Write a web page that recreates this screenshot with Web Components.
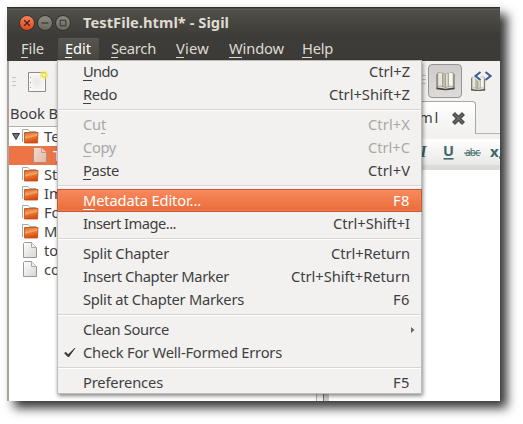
<!DOCTYPE html>
<html lang="en"><head><meta charset="utf-8"><title>Sigil</title>
<style>
html,body{margin:0;background:#fff;height:424px;overflow:hidden}
body{padding:7px 0 0 7px;box-sizing:border-box;font:14.7px/20px "Noto Sans","Open Sans",sans-serif;color:#3f3f3f}
</style></head><body>
<sigil-window></sigil-window>
<script>
// Text line whose letter spacing is adjusted to fill the width in its "w" attribute.
class FitText extends HTMLElement{
  connectedCallback(){
    const r=this.attachShadow({mode:'open'});
    r.innerHTML='<style>:host{display:inline-block;white-space:nowrap;margin-bottom:2px}span{display:inline-block}::slotted(u){text-decoration:none;background:linear-gradient(currentColor,currentColor) 0 100%/calc(100% - 1px) 1px no-repeat}</style><span><slot></slot></span>';
    const s=r.querySelector('span'),w=+this.getAttribute('w');
    if(w){const n=this.textContent.length,nat=s.getBoundingClientRect().width;
      s.style.letterSpacing=((w-1-nat)/n)+'px';this.style.width=w+'px';}
  }
}
const def=(name,html,up)=>customElements.define(name,class extends HTMLElement{
  connectedCallback(){if(this.shadowRoot)return;const r=this.attachShadow({mode:'open'});r.innerHTML=html;if(up)up(this,r)}
});
customElements.define('fit-text',FitText);

def('title-bar',`<style>
:host{display:flex;align-items:center;height:31px;padding:0 0 0 12px;box-sizing:border-box;gap:2px;font-weight:700;color:#dfdbd2}
svg{width:16px;height:16px;display:block;flex:none;overflow:visible}fit-text{margin-left:10px}
</style>
<svg viewBox="0 0 16 16"><defs><linearGradient id="a" x2="0" y2="1"><stop stop-color="#f58561"/><stop offset="1" stop-color="#dd4717"/></linearGradient></defs><circle cx="8" cy="8" r="7.5" fill="url(#a)" stroke="#35322c"/><path d="M5.2 5.2l5.6 5.6M10.8 5.2l-5.6 5.6" stroke="#48251a" stroke-width="1.3"/></svg>
<svg viewBox="0 0 16 16"><defs><linearGradient id="b" x2="0" y2="1"><stop stop-color="#8e8c82"/><stop offset="1" stop-color="#68665e"/></linearGradient></defs><circle cx="8" cy="8" r="7.5" fill="url(#b)" stroke="#302f2a"/><path d="M4.5 8h7" stroke="#35342f" stroke-width="1.2"/></svg>
<svg viewBox="0 0 16 16"><defs><linearGradient id="c" x2="0" y2="1"><stop stop-color="#8e8c82"/><stop offset="1" stop-color="#68665e"/></linearGradient></defs><circle cx="8" cy="8" r="7.5" fill="url(#c)" stroke="#302f2a"/><path d="M5.2 5.2h5.6v5.6H5.2z" fill="none" stroke="#35342f"/></svg>
<fit-text w="147">TestFile.html* - Sigil</fit-text>`);

def('menu-title',`<style>:host{display:flex;height:22px;align-items:center;padding:0 7px;color:#dfdbd2;box-sizing:border-box;border-radius:3px 3px 0 0}
:host([open]){background:linear-gradient(#55544e,#484741);color:#fff;box-shadow:inset 0 1px #5b5a53}</style><slot></slot>`);

def('menu-row',`<style>:host{display:flex;height:23px;box-sizing:border-box;padding:0 11px 0 26px;align-items:center;justify-content:space-between;position:relative}
:host([off]){color:#aaa8a5}
:host([active]){color:#fff;background:linear-gradient(#f98b5f,#e96b39);box-shadow:inset 0 0 0 1px #bf5a33,inset 0 0 0 2px #f98e6466}
svg{position:absolute;overflow:visible}.c{left:7px;top:7px}.a{right:7px;top:9px}</style><slot></slot>`,(e,r)=>{
  if(e.hasAttribute('checked'))r.innerHTML+='<svg class="c" width="12" height="10"><path d="M0 5L2 4L4.2 6.3L10.5 0H11.5L5 9H3.8Z" fill="#3a3a3a"/></svg>';
  if(e.hasAttribute('sub'))r.innerHTML+='<svg class="a" width="4" height="6"><path d="M0 0L3.5 3L0 6Z" fill="#666"/></svg>';
});
def('menu-line',`<style>:host{display:block;height:7px;margin:0 1px;background:linear-gradient(#d7d5d2 0 0) 0 3px/100% 1px no-repeat,linear-gradient(#fff 0 0) 0 4px/100% 1px no-repeat}</style>`);

def('edit-menu',`<style>:host{display:block;width:365px;height:334px;background:linear-gradient(90deg,#f2f1f0,#f2f1ef);box-shadow:1px 2px 4px #0007,inset 0 0 0 1px #bdbbb7}</style>
<menu-row><fit-text w="36"><u>U</u>ndo</fit-text><fit-text w="42">Ctrl+Z</fit-text></menu-row>
<menu-row><fit-text w="35"><u>R</u>edo</fit-text><fit-text w="82">Ctrl+Shift+Z</fit-text></menu-row>
<menu-line></menu-line>
<menu-row off><fit-text w="24">Cu<u>t</u></fit-text><fit-text w="43">Ctrl+X</fit-text></menu-row>
<menu-row off><fit-text w="34"><u>C</u>opy</fit-text><fit-text w="43">Ctrl+C</fit-text></menu-row>
<menu-row><fit-text w="37"><u>P</u>aste</fit-text><fit-text w="43">Ctrl+V</fit-text></menu-row>
<menu-line></menu-line>
<menu-row active><fit-text w="119"><u>M</u>etadata Editor...</fit-text><fit-text w="18">F8</fit-text></menu-row>
<menu-row><fit-text w="94">Insert Image...</fit-text><fit-text w="78">Ctrl+Shift+I</fit-text></menu-row>
<menu-line></menu-line>
<menu-row><fit-text w="87">Split Chapter</fit-text><fit-text w="80">Ctrl+Return</fit-text></menu-row>
<menu-row><fit-text w="147">Insert Chapter Marker</fit-text><fit-text w="120">Ctrl+Shift+Return</fit-text></menu-row>
<menu-row><fit-text w="162">Split at Chapter Markers</fit-text><fit-text w="18">F6</fit-text></menu-row>
<menu-line></menu-line>
<menu-row sub><fit-text w="87">Clean Source</fit-text></menu-row>
<menu-row checked><fit-text w="200">Check For Well-Formed Errors</fit-text></menu-row>
<menu-line></menu-line>
<menu-row><fit-text w="81">Preferences</fit-text><fit-text w="18">F5</fit-text></menu-row>`);

const folder='<svg width="17" height="15" viewBox="0 0 17 15"><defs><linearGradient id="f" x2="0.3" y2="1"><stop stop-color="#d4601f"/><stop offset=".5" stop-color="#f3a767"/><stop offset=".6" stop-color="#e8732f"/><stop offset="1" stop-color="#d94d12"/></linearGradient></defs><path d="M.5 13V.5H6L7.5 2.5H14V5" fill="#fff" stroke="#a9a9a5"/><path d="M2.5 3.5H16L15.5 14H2.5Z" fill="url(#f)" stroke="#c0480f" stroke-width=".8"/></svg>';
const page='<svg width="15" height="17" viewBox="0 0 15 17"><defs><linearGradient id="p" x2="1" y2="1"><stop stop-color="#fff"/><stop offset="1" stop-color="#d5d5d3"/></linearGradient></defs><path d="M1.5.5H8.5L13.5 5.5V15.5H.5V1.5Z" fill="url(#p)" stroke="#999995"/><path d="M8.5.5V5.5H13.5" fill="#eee" stroke="#aaa"/></svg>';
def('tree-row',`<style>:host{display:flex;height:19px;align-items:center;padding-left:13px;gap:5px;position:relative;white-space:nowrap}
svg{flex:none}:host([kind=page]){padding-left:14px;gap:6px}
.l{margin-bottom:2px}
:host([selected]){background:#ee7445!important;padding-left:24px!important;gap:3px!important;color:#fff}:host([selected]) svg{opacity:.72}
.t{position:absolute;left:3px;top:6px;width:8px;height:7px}:host([selected]) .l{margin:0;border:1px dotted #a77762;height:17px;width:30px;padding-left:1px;line-height:17px}</style><span class="i"></span><span class="l"><slot></slot></span>`,(e,r)=>{
  const i=r.querySelector('.i');i.style.display='flex';i.innerHTML=e.getAttribute('kind')=='page'?page:folder;
  if(e.hasAttribute('expanded'))r.innerHTML+='<svg class="t" viewBox="0 0 8 7"><path d="M.5.5H7.5L4 6.5Z" fill="#777" stroke="#333"/></svg>';
});

def('book-browser',`<style>:host{display:flex;flex-direction:column;width:308px;height:340px}
.bar{height:40px;display:flex;align-items:center;box-sizing:border-box;padding:0 0 0 3px;gap:12px}
.h{height:25px;padding:2px 0 0 1px;box-sizing:border-box}
.list{flex:1;background:#fff;border:1px solid #b5b0a9;border-bottom:0;border-left:0}</style>
<div class="bar"><svg width="4" height="9"><path d="M0 .5h4M0 4.5h4M0 8.5h4" stroke="#c9c7c4"/></svg>
<svg width="21" height="22" viewBox="0 0 21 22"><defs><radialGradient id="n"><stop stop-color="#e6e6e4"/><stop offset="1" stop-color="#fafafa"/></radialGradient></defs><path d="M.5 2.5h17v19H.5z" fill="url(#n)" stroke="#8b8b87"/><path d="M2.5 7v1M2.5 12v1M2.5 17v1" stroke="#999"/><circle cx="16" cy="5" r="4.4" fill="#f5ea68" opacity=".65"/><circle cx="16" cy="5" r="2" fill="#fff9b0" stroke="#eadb2e"/></svg></div>
<div class="h"><fit-text w="49">Book B</fit-text></div>
<div class="list"><tree-row expanded>Te</tree-row><tree-row kind="page" selected>T</tree-row><tree-row>St</tree-row><tree-row>Im</tree-row><tree-row>Fo</tree-row><tree-row>M</tree-row><tree-row kind="page">to</tree-row><tree-row kind="page">co</tree-row></div>`);

const book='<path d="M2 5L4 3V20L2 21ZM28 5L26 3V20L28 21Z" fill="#777269"/><path d="M2 20L13 21L15 22L17 21L28 20V22L16 23H14L2 22Z" fill="#4a4437"/><path d="M4 3Q9 1.5 11 4V19Q8 17.5 4 19Z" fill="#e9e7dc" stroke="#8c887c" stroke-width=".8"/><path d="M11 4Q13 2 15 5V21Q13 18 11 19Z" fill="#c4c0ae" stroke="#8c887c" stroke-width=".7"/><path d="M26 3Q21 1.5 19 4V19Q22 17.5 26 19Z" fill="#f7f5ee" stroke="#8c887c" stroke-width=".8"/><path d="M19 4Q17 2 15 5V21Q17 18 19 19Z" fill="#deddcf" stroke="#8c887c" stroke-width=".7"/>';
def('editor-pane',`<style>:host{display:flex;flex-direction:column;flex:1;height:340px}
.bar{height:40px;box-sizing:border-box;padding:3px 0 0 105px;display:flex;align-items:flex-start;gap:8px}
.grip{margin:11px 2px 0 -6px}.btn{width:34px;height:34px;box-sizing:border-box;border:1px solid #969490;border-radius:4px;background:linear-gradient(#cfcdcb,#dddbd9);display:flex;align-items:center;justify-content:center;margin-left:-8px}
.code{margin-top:7px}
.tabs{height:33px;box-sizing:border-box;border-bottom:1px solid #b5b2ae;display:flex}
.tab{height:33px;width:153px;box-sizing:border-box;border:1px solid #aaa7a3;border-bottom:0;border-radius:4px 4px 0 0;background:linear-gradient(#fff,#f2f1f0);display:flex;justify-content:flex-end;align-items:center;padding-right:10px;gap:11px}
.fmt{margin-top:5px;height:26px;display:flex;align-items:center;background:linear-gradient(#fff,#e8e8e7)}
.fmt svg{margin-left:96px;overflow:visible}
.wrap{display:flex;flex:1}.edge{width:5px;background:#ccc;border-left:1px solid #777}
.doc{flex:1;background:#fff;border-top:5px solid #dcdbda}</style>
<div class="bar"><svg class="grip" width="4" height="9"><path d="M0 .5h4M0 4.5h4M0 8.5h4" stroke="#c2c0bd"/></svg>
<div class="btn"><svg width="21" height="20" viewBox="0 1 30 23" preserveAspectRatio="none">${book}</svg></div>
<svg class="code" width="23" height="21" viewBox="0 0 23 21"><g transform="translate(0,4) scale(.54,.7)">${book}</g><path d="M10.5 1L5.5 5L10.5 9M15.5 1L20.5 5L15.5 9" fill="none" stroke="#f4f4f4" stroke-width="4"/><path d="M10.5 1L5.5 5L10.5 9M15.5 1L20.5 5L15.5 9" fill="none" stroke="#3e5f91" stroke-width="2.2"/></svg></div>
<div class="tabs"><div class="tab"><fit-text w="29">tml</fit-text><svg width="13" height="13" viewBox="0 0 13 13"><path d="M3 3L10 10M10 3L3 10" stroke="#4b4c4b" stroke-width="4.2" stroke-linecap="square"/><path d="M2.5 2.5L10.5 10.5M10.5 2.5L2.5 10.5" stroke="#70716f" stroke-width="1.2"/></svg></div></div>
<div class="fmt"><svg width="75" height="16" viewBox="0 0 75 16"><g fill="#41686a" font-weight="700"><text x="1" y="13" font-family="Liberation Serif" font-style="italic" font-size="17">I</text><text x="24" y="12" font-family="Noto Sans" font-size="14.5">U</text><path d="M24.5 14h10v1.600h-10z"/><text x="46" y="12" font-family="Noto Sans" font-size="10" font-weight="400" textLength="15">abc</text><path d="M45 8.500h17v1H45z"/><text x="71" y="13" font-family="Noto Sans" font-size="15">x</text><path d="M80 12.500h2v2h-2z"/></g></svg></div>
<div class="wrap"><div class="edge"></div><div class="doc"></div></div>`);

def('sigil-window',`<style>
:host{display:block;position:relative;width:493px;height:394px;background:#f2f1f0;box-shadow:7px 7px 10px #000c}
.clip{width:493px;height:394px;overflow:hidden}
.top{height:54px;box-sizing:border-box;background:linear-gradient(#303029 0 1px,#68675f 2px,#504f48 3px,#3d3c38 28px,#3c3b37)}
.content{display:flex;border-left:2px solid #aaa49c}
.split{width:6px;background:#f2f1f0;height:340px}
edit-menu{position:absolute;left:50px;top:53px}
.mb{display:flex;padding-left:7px}
</style>
<div class="clip"><div class="top"><title-bar></title-bar><div class="mb">
<menu-title><fit-text w="24"><u>F</u>ile</fit-text></menu-title><menu-title open style="margin-left:6px"><fit-text w="27"><u>E</u>dit</fit-text></menu-title><menu-title style="margin-left:5px"><fit-text w="46"><u>S</u>earch</fit-text></menu-title><menu-title style="margin-left:5px"><fit-text w="34"><u>V</u>iew</fit-text></menu-title><menu-title style="margin-left:5px"><fit-text w="56"><u>W</u>indow</fit-text></menu-title><menu-title style="margin-left:3px"><fit-text w="32"><u>H</u>elp</fit-text></menu-title></div></div>
<div class="content"><book-browser></book-browser><div class="split"></div><editor-pane></editor-pane></div></div>
<edit-menu></edit-menu>`);
</script></body></html>
